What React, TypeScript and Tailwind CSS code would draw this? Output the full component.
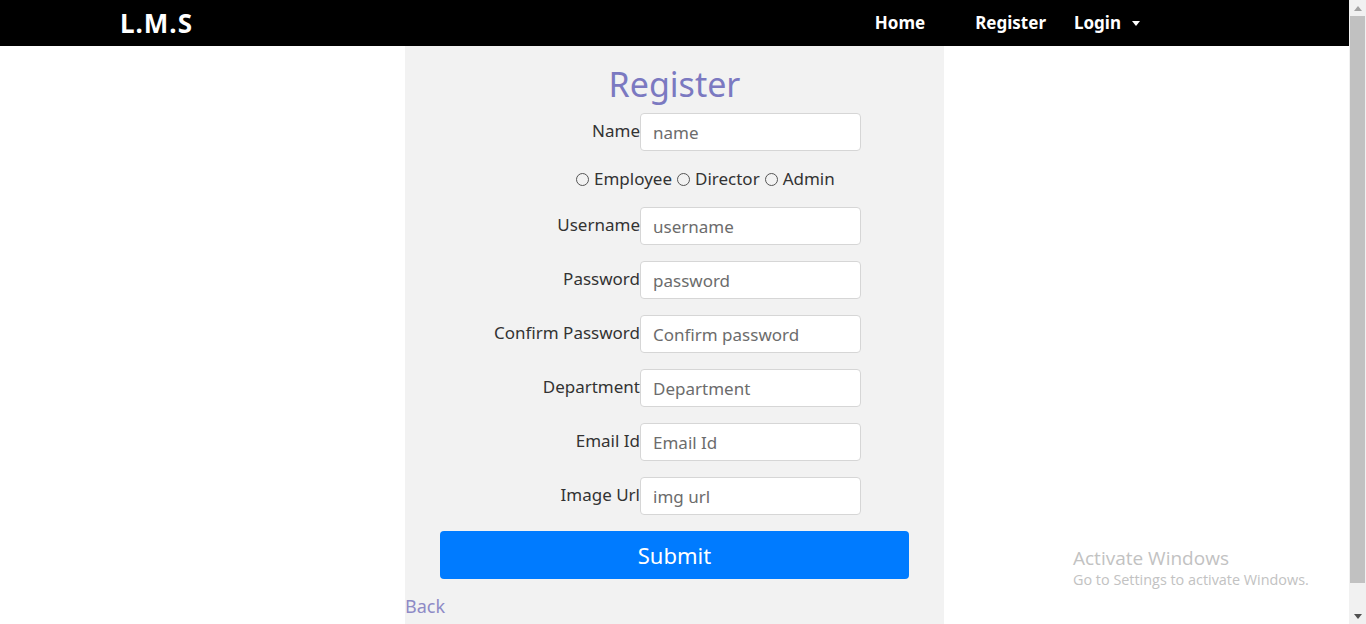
import React from "react";

const fields = [
  { label: "Username", placeholder: "username" },
  { label: "Password", placeholder: "password" },
  { label: "Confirm Password", placeholder: "Confirm password" },
  { label: "Department", placeholder: "Department" },
  { label: "Email Id", placeholder: "Email Id" },
  { label: "Image Url", placeholder: "img url" },
];

const Row = ({ label, placeholder }: { label: string; placeholder: string }) => (
  <div className="flex items-center h-[38px] mb-[16px]">
    <label className="w-[235px] text-right text-[17px] text-[#333] -mt-[2px]">{label}</label>
    <input
      placeholder={placeholder}
      className="w-[221px] h-[38px] bg-white border border-[#d6d6d6] rounded-[4px] px-[12px] text-[17px] placeholder:text-[#6c6c6c] outline-none"
    />
  </div>
);

const App = () => {
  return (
    <div className="w-full h-[624px] flex bg-white overflow-hidden font-['Noto_Sans',sans-serif]">
      <div className="flex-1 flex flex-col">
        <nav className="h-[46px] bg-black flex items-center text-white">
          <div className="pl-[120px] text-[26px] font-bold tracking-[1px]">L.M.S</div>
          <div className="ml-auto flex items-center text-[17px] font-bold pr-[209px]">
            <a className="mr-[50px]">Home</a>
            <a className="mr-[28px]">Register</a>
            <a className="flex items-center">
              Login
              <span className="ml-[11px] border-t-[5px] border-t-white border-x-[4px] border-x-transparent"></span>
            </a>
          </div>
        </nav>
        <div className="flex-1 flex justify-center">
          <div className="w-[539px] bg-[#f2f2f2] flex flex-col">
            <h1 className="text-center text-[34px] leading-[44px] mt-[16px] text-[#7b79c1]">Register</h1>
            <div className="mt-[7px]">
              <Row label="Name" placeholder="name" />
              <div className="flex items-center h-[24px] mb-[16px] pl-[171px] text-[17px] text-[#333]">
                <span className="w-[13px] h-[13px] rounded-full border border-[#555] mr-[5px]"></span>
                Employee
                <span className="w-[13px] h-[13px] rounded-full border border-[#555] ml-[5px] mr-[5px]"></span>
                Director
                <span className="w-[13px] h-[13px] rounded-full border border-[#555] ml-[5px] mr-[5px]"></span>
                Admin
              </div>
              {fields.map((f) => (
                <Row key={f.label} label={f.label} placeholder={f.placeholder} />
              ))}
            </div>
            <button className="mx-[35px] h-[48px] bg-[#007bff] text-white text-[22px] rounded-[4px]">
              Submit
            </button>
            <a className="mt-[17px] text-[18px] text-[#8e8ac6] leading-[20px]">Back</a>
          </div>
          <div className="w-0 relative">
            <div className="absolute left-[129px] top-[500px] w-[260px] text-[#c2c2c2] font-['Open_Sans',sans-serif]">
              <div className="text-[19px] leading-[24px]">Activate Windows</div>
              <div className="text-[14.4px] leading-[20px]">Go to Settings to activate Windows.</div>
            </div>
          </div>
        </div>
      </div>
      <div className="w-[17px] bg-[#f1f1f1] flex flex-col items-center">
        <div className="h-[16px] flex items-center justify-center">
          <span className="border-b-[5px] border-b-[#a3a3a3] border-x-[4px] border-x-transparent"></span>
        </div>
        <div className="w-[15px] flex-1 bg-[#c1c1c1]"></div>
        <div className="h-[41px] flex items-end justify-center pb-[5px]">
          <span className="border-t-[5px] border-t-[#505050] border-x-[4px] border-x-transparent"></span>
        </div>
      </div>
    </div>
  );
};

export default App;
